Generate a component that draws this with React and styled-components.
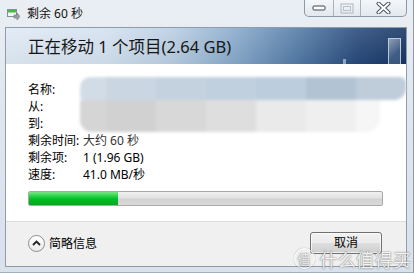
import React from 'react';
import styled, { createGlobalStyle } from 'styled-components';

const Global = createGlobalStyle`
  html, body { margin: 0; padding: 0; background: #fff; }
  body {
    width: 414px; height: 273px; overflow: hidden;
    font-family: "Noto Sans", "Noto Sans CJK SC", sans-serif;
  }
`;

const Window = styled.div`
  position: relative;
  width: 414px;
  height: 273px;
  box-sizing: border-box;
  display: flex;
  flex-direction: column;
  background: linear-gradient(#ebeff4, #dfe6ee 40%, #d9e1ea);
  border-right: 1px solid #8d99a8;
  border-bottom: 1px solid #a3aebb;
`;

const TitleBar = styled.div`
  height: 27px;
  flex-shrink: 0;
  display: flex;
  align-items: center;
  padding-left: 7px;
  gap: 7px;
  font-size: 12px;
  color: #111;
  line-height: 1;
  padding-top: 1px;
  box-sizing: border-box;
`;

const Controls = styled.div`
  position: absolute;
  top: 0;
  left: 304px;
  width: 103px;
  height: 17px;
  display: flex;
  box-sizing: border-box;
  border: 1px solid #8c99a8;
  border-top: none;
  border-radius: 0 0 5px 5px;
  background: linear-gradient(#f4f6f9, #e3e8ee);
  overflow: hidden;
`;

const CtlButton = styled.div`
  width: ${p => p.$w}px;
  height: 100%;
  display: flex;
  align-items: center;
  justify-content: center;
  border-left: ${p => (p.$first ? 'none' : '1px solid #a8b3c0')};
  box-sizing: border-box;
`;

const Client = styled.div`
  flex: 1;
  margin: 0 6px 5px 5px;
  border: 1px solid #8f9cac;
  display: flex;
  flex-direction: column;
  background: #fff;
  min-height: 0;
`;

const Header = styled.div`
  position: relative;
  height: 36px;
  flex-shrink: 0;
  display: flex;
  align-items: center;
  padding-left: 22px;
  font-family: "Noto Sans", "Noto Sans CJK SC", sans-serif;
  font-size: 16.5px;
  color: #161616;
  background:
    linear-gradient(rgba(255,255,255,0.12), rgba(0,0,0,0.04)),
    linear-gradient(to right, #e0eaf5 0%, #d3e1ef 25%, #b8cde2 42%, #85a7c9 58%, #4f77a3 74%, #27497a 88%, #163562 100%);
`;

const Glass = styled.div`
  position: absolute;
  right: 5px;
  bottom: 0;
  width: 13px;
  height: 26px;
  box-sizing: border-box;
  border: 1px solid rgba(220,232,245,0.75);
  border-bottom: none;
  background: linear-gradient(135deg, rgba(255,255,255,0.45), rgba(160,185,215,0.25) 60%, rgba(255,255,255,0.15));
`;

const Speck = styled.div`
  position: absolute;
  left: 337px;
  bottom: 0;
  width: 3px;
  height: 5px;
  background: rgba(200,220,240,0.6);
`;

const Body = styled.div`
  position: relative;
  flex: 1;
  padding: 17px 0 14px 22px;
  display: flex;
  flex-direction: column;
`;

const Rows = styled.div`
  display: grid;
  grid-template-columns: 55px 1fr;
  grid-auto-rows: 17px;
  font-size: 12px;
  color: #000;
  align-items: center;
  line-height: 17px;
`;

const Label = styled.div`
  white-space: nowrap;
`;

const Value = styled.div`
  white-space: nowrap;
  color: ${p => p.$faded ? '#333' : '#000'};
`;

const Blob = styled.div`
  position: absolute;
  left: 74px;
  top: 13px;
  width: 326px;
  display: flex;
  flex-direction: column;
  filter: blur(1.8px);
`;

const BlobRow = styled.div`
  display: flex;
  height: ${p => p.$h}px;
  border-radius: ${p => p.$r};
  overflow: hidden;
  width: ${p => p.$w}px;
`;

const Cell = styled.div`
  width: ${p => p.$w}px;
  flex-shrink: 0;
  background: ${p => p.$c};
`;

const Bar = styled.div`
  margin-top: 8px;
  width: 355px;
  height: 15px;
  box-sizing: border-box;
  border: 1px solid #a9a9a9;
  border-radius: 2px;
  background: linear-gradient(#f1f1f1, #e2e2e2 45%, #d2d2d2 55%, #dadada);
  overflow: hidden;
  display: flex;
`;

const Fill = styled.div`
  height: 100%;
  background: linear-gradient(#7be585, #1fd040 35%, #00bd27 55%, #07a625);
`;

const Footer = styled.div`
  position: relative;
  height: 45px;
  flex-shrink: 0;
  border-top: 1px solid #dcdcdc;
  background: #f0f0f0;
  display: flex;
  align-items: center;
  padding: 0 24px 2px 22px;
  box-sizing: border-box;
  font-size: 12px;
  color: #000;
`;

const Toggle = styled.div`
  display: flex;
  align-items: center;
  gap: 4px;
`;

const Circle = styled.div`
  width: 17px;
  height: 17px;
  box-sizing: border-box;
  border-radius: 50%;
  border: 1px solid #8e8e8e;
  background: linear-gradient(#ffffff, #e9e9e9);
  display: flex;
  align-items: center;
  justify-content: center;
`;

const CancelButton = styled.div`
  margin-left: auto;
  width: 72px;
  height: 22px;
  box-sizing: border-box;
  border: 1px solid #707070;
  border-radius: 3px;
  background: linear-gradient(#f2f2f2, #ebebeb 48%, #dddddd 52%, #cfcfcf);
  box-shadow: inset 0 0 0 1px rgba(255,255,255,0.7);
  display: flex;
  align-items: flex-start;
  padding-top: 2px;
  justify-content: center;
  font-size: 12px;
  line-height: 16px;
`;

const Watermark = styled.div`
  position: absolute;
  right: 2px;
  bottom: 3px;
  display: flex;
  align-items: center;
  gap: 5px;
  color: rgba(255,255,255,0.92);
  font-family: "Noto Sans CJK SC", sans-serif;
  text-shadow: 0 0 1px rgba(80,80,80,0.8), 0 0 2px rgba(90,90,90,0.5);
`;

const WmBadge = styled.div`
  width: 19px;
  height: 19px;
  border-radius: 50%;
  border: 1.5px solid rgba(255,255,255,0.9);
  box-shadow: 0 0 1px rgba(80,80,80,0.8);
  display: flex;
  align-items: center;
  justify-content: center;
  font-size: 13px;
  line-height: 1;
`;

const WmText = styled.div`
  font-size: 18px;
  line-height: 1;
  letter-spacing: 0.3px;
`;

const TitleIcon = () => (
  <svg width="13" height="11" viewBox="0 0 13 11">
    <rect x="0.5" y="0.5" width="9" height="7" fill="#f4f4f4" stroke="#8a8f96" />
    <rect x="1" y="1" width="8" height="2.5" fill="#3cc23c" />
    <path d="M7 6 h3 v-2 l3 3.5 l-3 3.5 v-2 h-3 z" fill="#9aa0a8" stroke="#6f757d" strokeWidth="0.6" />
  </svg>
);

const blobTop = ['#d2dce7', '#cad6e2', '#c4d2e0', '#c1d0df', '#bccddd', '#b2c3d4', '#bfccda'];
const blobBottom = ['#d5d5d5', '#d1d1d1', '#d8d8d8', '#dedede', '#eaeaea', '#efefef', '#f6f6f6'];
const widths = [26, 50, 50, 50, 50, 50, 50];

export default function App() {
  return (
    <>
      <Global />
      <Window>
        <TitleBar>
          <TitleIcon />
          <span>剩余 60 秒</span>
        </TitleBar>
        <Controls>
          <CtlButton $w={29} $first>
            <svg width="14" height="6" viewBox="0 0 14 6">
              <rect x="1" y="1" width="12" height="4" rx="1" fill="#fff" stroke="#3b4450" />
            </svg>
          </CtlButton>
          <CtlButton $w={27}>
            <svg width="14" height="11" viewBox="0 0 14 11">
              <rect x="1" y="1" width="12" height="9" fill="none" stroke="#aeb8c4" />
              <rect x="3.5" y="3.5" width="7" height="4" fill="none" stroke="#b8c1cc" />
            </svg>
          </CtlButton>
          <CtlButton $w={47}>
            <svg width="15" height="12" viewBox="0 0 15 12">
              <path d="M2.5 1.5 L12.5 10.5 M12.5 1.5 L2.5 10.5" stroke="#4b5563" strokeWidth="4" strokeLinecap="round" />
              <path d="M2.5 1.5 L12.5 10.5 M12.5 1.5 L2.5 10.5" stroke="#fff" strokeWidth="2" strokeLinecap="round" />
            </svg>
          </CtlButton>
        </Controls>
        <Client>
          <Header>
            正在移动 1 个项目(2.64 GB)
            <Speck />
            <Glass />
          </Header>
          <Body>
            <Rows>
              <Label>名称:</Label><Value></Value>
              <Label>从:</Label><Value></Value>
              <Label>到:</Label><Value></Value>
              <Label>剩余时间:</Label><Value $faded>大约 60 秒</Value>
              <Label>剩余项:</Label><Value>1 (1.96 GB)</Value>
              <Label>速度:</Label><Value>41.0 MB/秒</Value>
            </Rows>
            <Blob>
              <BlobRow $h={23} $w={326} $r="10px 6px 12px 4px">
                {blobTop.map((c, i) => <Cell key={i} $w={widths[i]} $c={c} />)}
              </BlobRow>
              <BlobRow $h={32} $w={300} $r="0 0 14px 12px">
                {blobBottom.map((c, i) => <Cell key={i} $w={widths[i]} $c={c} />)}
              </BlobRow>
            </Blob>
            <Bar>
              <Fill style={{ width: '25.3%' }} />
            </Bar>
          </Body>
          <Footer>
            <Toggle>
              <Circle>
                <svg width="9" height="6" viewBox="0 0 9 6">
                  <path d="M1 5 L4.5 1.5 L8 5" fill="none" stroke="#222" strokeWidth="1.8" />
                </svg>
              </Circle>
              <span>简略信息</span>
            </Toggle>
            <CancelButton>取消</CancelButton>
          </Footer>
        </Client>
        <Watermark>
          <WmBadge>值</WmBadge>
          <WmText>什么值得买</WmText>
        </Watermark>
      </Window>
    </>
  );
}
